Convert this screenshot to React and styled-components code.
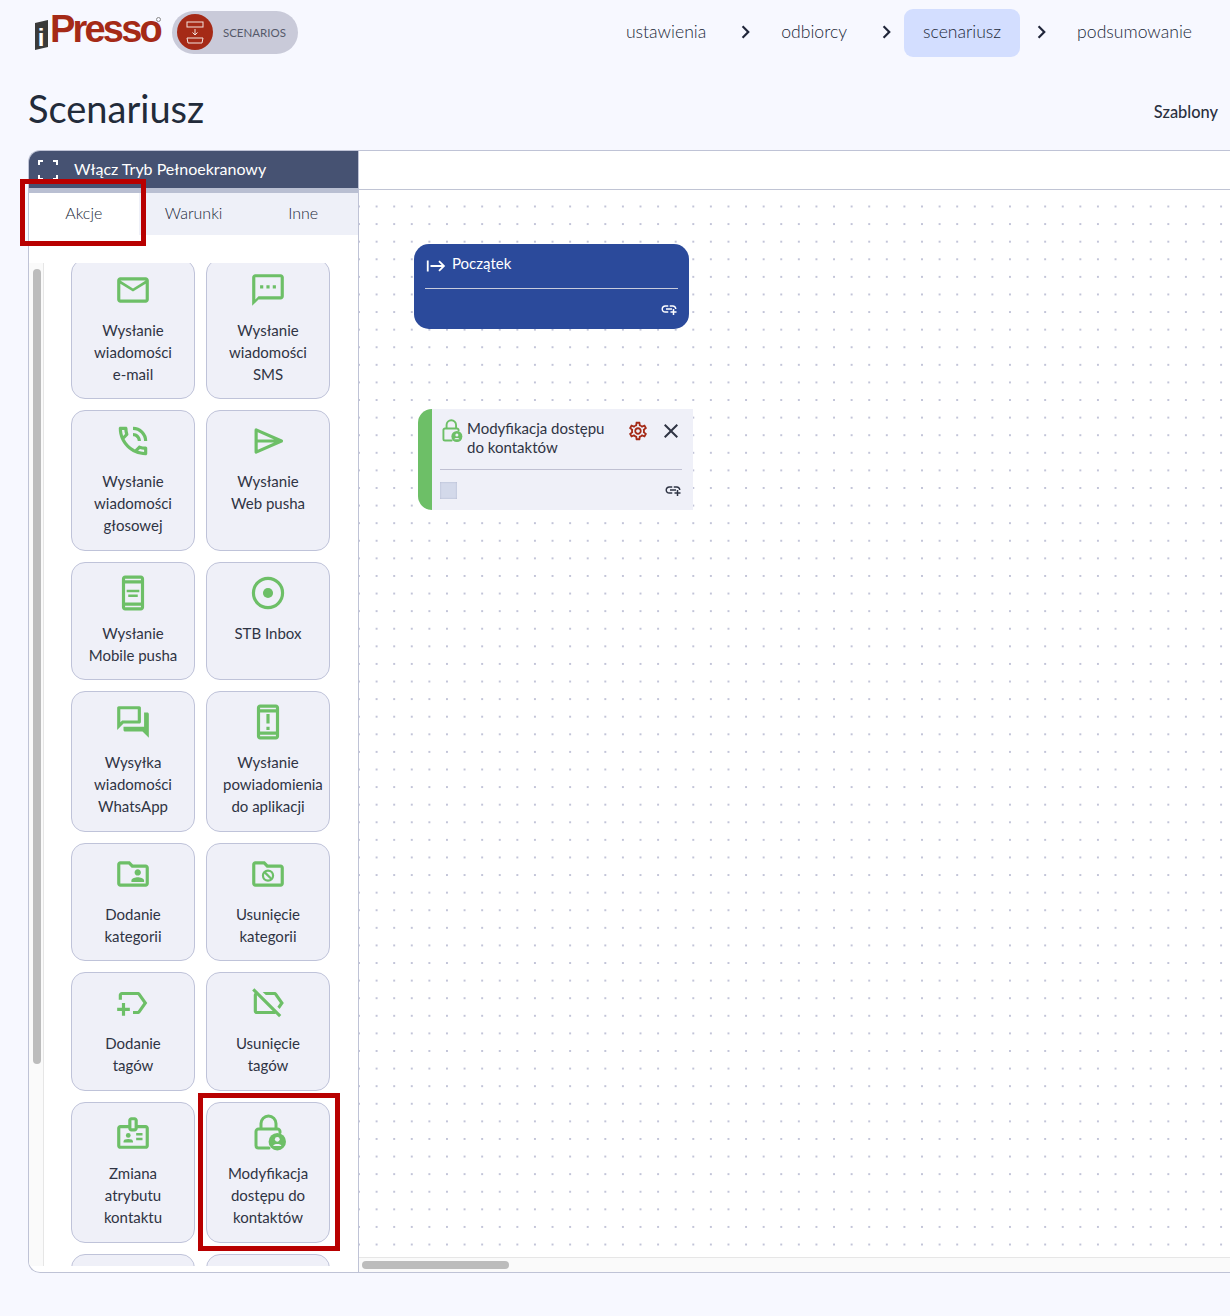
import { Fragment } from "react";
import styled, { createGlobalStyle } from "styled-components";
import {
  MdClose,
  MdChevronRight,
  MdOutlineAddLink,
  MdOutlineAod,
  MdOutlineBadge,
  MdOutlineFolderShared,
  MdOutlineForum,
  MdOutlineLabelOff,
  MdOutlineMailOutline,
  MdOutlineNewLabel,
  MdOutlinePhoneInTalk,
  MdOutlineSecurityUpdateWarning,
  MdOutlineSettings,
  MdOutlineStart,
  MdOutlineTextsms,
} from "react-icons/md";

const GlobalStyle = createGlobalStyle`
  html, body {
    margin: 0;
    padding: 0;
    background: #f7f8ff;
  }
  body {
    font-family: "Lato", "Noto Sans", sans-serif;
    color: #2f3444;
  }
`;

const Page = styled.div`
  position: relative;
  width: 1230px;
  height: 1316px;
  overflow: hidden;
  display: flex;
  flex-direction: column;
  box-sizing: border-box;
`;

const Header = styled.header`
  height: 66px;
  box-sizing: border-box;
  display: flex;
  align-items: flex-start;
  justify-content: space-between;
  padding: 9px 20px 0 34px;
`;

const Brand = styled.div`
  display: flex;
  align-items: center;
  height: 46px;
`;

const LogoMark = styled.svg`
  width: 15px;
  height: 30px;
  margin-top: 6px;
`;

const LogoText = styled.span`
  font-family: "Liberation Sans", sans-serif;
  font-weight: 700;
  font-size: 38px;
  letter-spacing: -2.8px;
  color: #a52a17;
  margin-left: 1px;
  margin-top: -5px;
`;

const LogoReg = styled.span`
  width: 3px;
  height: 3px;
  border: 1px solid #8a8a8a;
  border-radius: 50%;
  margin: -26px 0 0 -4px;
`;

const ModuleBadge = styled.div`
  display: flex;
  align-items: center;
  gap: 10px;
  width: 126px;
  height: 43px;
  box-sizing: border-box;
  margin-left: 11px;
  padding-left: 5px;
  border-radius: 22px;
  background: #c9cad9;
  font-size: 11.5px;
  color: #55596a;
`;

const ModuleIcon = styled.span`
  width: 36px;
  height: 36px;
  border-radius: 50%;
  background: #a52a17;
  display: flex;
  align-items: center;
  justify-content: center;
`;

const Steps = styled.nav`
  display: flex;
  align-items: center;
`;

const Step = styled.span`
  height: 48px;
  box-sizing: border-box;
  display: flex;
  align-items: center;
  padding: 0 ${(p) => (p.$active ? "19px" : "18px")} 3px;
  border-radius: 9px;
  font-size: 17.6px;
  font-weight: 300;
  color: #222838;
  background: ${(p) => (p.$active ? "#d3deff" : "transparent")};
`;

const StepArrow = styled(MdChevronRight)`
  width: 39px;
  font-size: 26px;
  margin: -2px -2px 0 2px;
  color: #20263a;
`;

const TitleRow = styled.div`
  height: 84px;
  display: flex;
  align-items: center;
  justify-content: space-between;
  padding: 0 12px 0 28px;
  box-sizing: border-box;
`;

const Title = styled.h1`
  margin: 0;
  font-size: 38px;
  font-weight: 400;
  color: #222b3a;
`;

const TemplatesLink = styled.span`
  margin-top: 6px;
  font-size: 16.4px;
  font-weight: 500;
  color: #2a3040;
`;

const Panel = styled.section`
  display: flex;
  width: 1202px;
  height: 1123px;
  margin-left: 28px;
  box-sizing: border-box;
  border: 1px solid #bfc3d6;
  border-right: 0;
  border-radius: 12px 0 0 12px;
  background: #fff;
  overflow: hidden;
`;

const Sidebar = styled.aside`
  width: 330px;
  flex: none;
  box-sizing: border-box;
  border-right: 1px solid #bfc3d6;
  display: flex;
  flex-direction: column;
`;

const FullscreenBar = styled.div`
  height: 42px;
  flex: none;
  box-sizing: border-box;
  border-bottom: 5px solid #b9bfd2;
  padding: 0 0 2px 7px;
  background: #465272;
  color: #fff;
  display: flex;
  align-items: center;
  gap: 14px;
  font-size: 16px;
`;

const FullscreenIcon = styled.svg`
  width: 24px;
  height: 24px;
  margin-top: 2px;
`;

const Tabs = styled.div`
  height: 42px;
  flex: none;
  display: grid;
  grid-template-columns: repeat(3, 1fr);
  background: #eef0f8;
`;

const Tab = styled.div`
  display: flex;
  align-items: center;
  justify-content: center;
  padding-bottom: 4px;
  font-size: 16px;
  font-weight: 300;
  color: #222838;
  background: ${(p) => (p.$active ? "#fff" : "transparent")};
`;

const ListArea = styled.div`
  flex: 1;
  display: flex;
  min-height: 0;
  margin: 28px 0 6px;
`;

const ScrollTrack = styled.div`
  width: 15px;
  flex: none;
  box-sizing: border-box;
  border-right: 1px solid #e6e6e6;
  background: #fafafa;
  padding: 6px 2px 0 4px;
`;

const ScrollThumb = styled.div`
  width: 8px;
  height: 795px;
  border-radius: 4px;
  background: #bcbcbc;
`;

const ActionList = styled.div`
  flex: 1;
  overflow: hidden;
  padding-left: 27px;
`;

const ActionGrid = styled.div`
  display: grid;
  grid-template-columns: 124px 124px;
  gap: 11px;
  margin-top: -4.5px;
`;

const ActionCard = styled.div`
  box-sizing: border-box;
  min-height: 60px;
  padding: 11px 16px 13.6px;
  border: 1px solid #bfc3d9;
  border-radius: 14px;
  background: #eff0f8;
  display: flex;
  flex-direction: column;
  align-items: center;
  text-align: center;
`;

const ActionIcon = styled.span`
  height: 38px;
  margin-bottom: 10px;
  display: flex;
  color: #6dbf67;
  font-size: 38px;
`;

const ActionLabel = styled.div`
  width: 90px;
  font-size: 15px;
  line-height: 22px;
  font-weight: 400;
  color: #2f3444;
`;

const Canvas = styled.div`
  flex: 1;
  min-width: 0;
  display: flex;
  flex-direction: column;
`;

const CanvasBar = styled.div`
  height: 39px;
  flex: none;
  box-sizing: border-box;
  border-bottom: 1px solid #c0c4d4;
`;

const Board = styled.div`
  position: relative;
  flex: 1;
  background-image: radial-gradient(circle, #c2c4d8 0.9px, transparent 1.2px);
  background-size: 17.6px 17.6px;
  background-position: -8.8px 7.7px;
`;

const StartNode = styled.div`
  position: absolute;
  left: 55px;
  top: 54px;
  width: 275px;
  height: 85px;
  box-sizing: border-box;
  padding: 10px 11px 0;
  border-radius: 15px;
  background: #2b4a9b;
  color: #fff;
`;

const NodeTitle = styled.div`
  height: 34px;
  display: flex;
  align-items: flex-start;
  gap: 5px;
  font-size: 15px;
  line-height: 18px;
  border-bottom: 1px solid #c8ccdc;

  svg {
    margin-top: 1px;
  }
`;

const NodeFooter = styled.div`
  display: flex;
  align-items: center;
  justify-content: flex-end;
  height: 40px;
  font-size: 18px;
`;

const ActionNode = styled.div`
  position: absolute;
  left: 59px;
  top: 219px;
  width: 275px;
  height: 101px;
  box-sizing: border-box;
  padding: 10px 11px 0 8px;
  border-left: 14px solid #6dbf67;
  border-radius: 14px 0 0 14px;
  background: #eff0f8;
  color: #2f3444;
`;

const ActionNodeHead = styled.div`
  height: 50px;
  display: flex;
  gap: 4px;
  border-bottom: 1px solid #bfc0d2;
  font-size: 15px;
  line-height: 19px;
`;

const NodeLockIcon = styled.span`
  height: 24px;
  margin-left: -1px;
  color: #6dbf67;
`;

const ActionNodeName = styled.div`
  width: 150px;
`;

const NodeTools = styled.div`
  margin: 0 -1px 0 auto;
  display: flex;
  gap: 10px;
  height: 24px;
  align-items: center;
`;

const ActionNodeFoot = styled.div`
  display: flex;
  align-items: center;
  justify-content: space-between;
  height: 40px;
  font-size: 18px;
`;

const Check = styled.span`
  width: 17px;
  height: 17px;
  background: #d3d9ea;
  box-shadow: inset 0 0 2px #a9afc8;
`;

const HScroll = styled.div`
  height: 15px;
  flex: none;
  box-sizing: border-box;
  border-top: 1px solid #e6e6e6;
  background: #fafafa;
  padding: 3px 0 0 3px;
`;

const HThumb = styled.div`
  width: 147px;
  height: 8px;
  border-radius: 4px;
  background: #bcbcbc;
`;

const Highlight = styled.div`
  position: absolute;
  left: ${(p) => p.$x}px;
  top: ${(p) => p.$y}px;
  width: ${(p) => p.$w}px;
  height: ${(p) => p.$h}px;
  box-sizing: border-box;
  border: 5px solid #b80000;
  pointer-events: none;
`;

const FolderBlockIcon = () => (
  <svg width="38" height="38" viewBox="0 0 24 24" fill="currentColor">
    <path d="M20 6h-8l-2-2H4c-1.1 0-1.99.9-1.99 2L2 18c0 1.1.9 2 2 2h16c1.1 0 2-.9 2-2V8c0-1.1-.9-2-2-2zm0 12H4V6h5.17l2 2H20v10z" />
    <circle cx="12" cy="13" r="3.2" fill="none" stroke="currentColor" strokeWidth="1.4" />
    <path d="M9.8 10.8l4.4 4.4" stroke="currentColor" strokeWidth="1.4" />
  </svg>
);

const LockPersonIcon = ({ size = 38 }) => (
  <svg width={size} height={size} viewBox="0 0 38 38" fill="none">
    <path
      d="M20 34H9.5A2.500 2.500 0 0 1 7 31.500V17.500A2.500 2.500 0 0 1 9.500 15h19a2.500 2.500 0 0 1 2.500 2.500v1"
      stroke="currentColor"
      strokeWidth="3"
      strokeLinecap="round"
    />
    <path d="M12 15V9.500a7.500 7.500 0 0 1 15 0V15" stroke="currentColor" strokeWidth="3" />
    <circle cx="28.300" cy="27.700" r="8.700" fill="currentColor" />
    <circle cx="28.300" cy="25.300" r="2.400" fill="#eff0f8" />
    <path d="M24.200 32c.6-2.600 7.600-2.600 8.200 0z" fill="#eff0f8" />
  </svg>
);

const SendIcon = () => (
  <svg width="38" height="38" viewBox="0 0 24 24" fill="none" stroke="currentColor" strokeWidth="2" strokeLinejoin="round">
    <path d="M4.500 5l16 7-16 7zM4.500 12H19" />
  </svg>
);

const InboxIcon = () => (
  <svg width="38" height="38" viewBox="0 0 24 24" fill="none">
    <circle cx="12" cy="12" r="9.200" stroke="currentColor" strokeWidth="2" />
    <circle cx="12" cy="12" r="3.200" fill="currentColor" />
  </svg>
);

const actions = [
  { label: "Wysłanie wiadomości e-mail", icon: <MdOutlineMailOutline /> },
  { label: "Wysłanie wiadomości SMS", icon: <MdOutlineTextsms /> },
  { label: "Wysłanie wiadomości głosowej", icon: <MdOutlinePhoneInTalk /> },
  { label: "Wysłanie Web pusha", icon: <SendIcon /> },
  { label: "Wysłanie Mobile pusha", icon: <MdOutlineAod /> },
  { label: "STB Inbox", icon: <InboxIcon /> },
  { label: "Wysyłka wiadomości WhatsApp", icon: <MdOutlineForum /> },
  { label: "Wysłanie powiadomienia do aplikacji", icon: <MdOutlineSecurityUpdateWarning /> },
  { label: "Dodanie kategorii", icon: <MdOutlineFolderShared /> },
  { label: "Usunięcie kategorii", icon: <FolderBlockIcon /> },
  { label: "Dodanie tagów", icon: <MdOutlineNewLabel /> },
  { label: "Usunięcie tagów", icon: <MdOutlineLabelOff /> },
  { label: "Zmiana atrybutu kontaktu", icon: <MdOutlineBadge /> },
  { label: "Modyfikacja dostępu do kontaktów", icon: <LockPersonIcon /> },
];

const steps = ["ustawienia", "odbiorcy", "scenariusz", "podsumowanie"];

export default function App() {
  return (
    <Page>
      <GlobalStyle />
      <Header>
        <Brand>
          <LogoMark viewBox="0 0 15 30">
            <polygon points="1,3 14,0 14,27 1,30" fill="#3a3a3a" />
            <text x="3.800" y="26" fontFamily="Liberation Sans" fontWeight="700" fontSize="24" fill="#fff">i</text>
          </LogoMark>
          <LogoText>Presso</LogoText>
          <LogoReg />
          <ModuleBadge>
            <ModuleIcon>
              <svg width="22" height="24" viewBox="0 0 22 24" fill="none" stroke="#f3e3df" strokeWidth="1">
                <rect x="3" y="2" width="16" height="5" />
                <path d="M3 18h16l-1 5H4z" />
                <path d="M11 9v6M8.500 12.500l2.500 2.500 2.500-2.500" />
              </svg>
            </ModuleIcon>
            SCENARIOS
          </ModuleBadge>
        </Brand>
        <Steps>
          {steps.map((step, i) => (
            <Fragment key={step}>
              {i > 0 && <StepArrow />}
              <Step $active={step === "scenariusz"}>{step}</Step>
            </Fragment>
          ))}
        </Steps>
      </Header>

      <TitleRow>
        <Title>Scenariusz</Title>
        <TemplatesLink>Szablony</TemplatesLink>
      </TitleRow>

      <Panel>
        <Sidebar>
          <FullscreenBar>
            <FullscreenIcon viewBox="0 0 24 24" fill="none" stroke="#fff" strokeWidth="2">
              <path d="M3 7V3h4M17 3h4v4M21 17v4h-4M7 21H3v-4" />
            </FullscreenIcon>
            Włącz Tryb Pełnoekranowy
          </FullscreenBar>
          <Tabs>
            <Tab $active>Akcje</Tab>
            <Tab>Warunki</Tab>
            <Tab>Inne</Tab>
          </Tabs>
          <ListArea>
            <ScrollTrack>
              <ScrollThumb />
            </ScrollTrack>
            <ActionList>
              <ActionGrid>
                {actions.map((action) => (
                  <ActionCard key={action.label}>
                    <ActionIcon>{action.icon}</ActionIcon>
                    <ActionLabel>{action.label}</ActionLabel>
                  </ActionCard>
                ))}
                <ActionCard />
                <ActionCard />
              </ActionGrid>
            </ActionList>
          </ListArea>
        </Sidebar>

        <Canvas>
          <CanvasBar />
          <Board>
            <StartNode>
              <NodeTitle>
                <MdOutlineStart size={22} />
                Początek
              </NodeTitle>
              <NodeFooter>
                <MdOutlineAddLink />
              </NodeFooter>
            </StartNode>
            <ActionNode>
              <ActionNodeHead>
                <NodeLockIcon>
                  <LockPersonIcon size={24} />
                </NodeLockIcon>
                <ActionNodeName>Modyfikacja dostępu do kontaktów</ActionNodeName>
                <NodeTools>
                  <MdOutlineSettings size={22} color="#a52a17" />
                  <MdClose size={24} />
                </NodeTools>
              </ActionNodeHead>
              <ActionNodeFoot>
                <Check />
                <MdOutlineAddLink />
              </ActionNodeFoot>
            </ActionNode>
          </Board>
          <HScroll>
            <HThumb />
          </HScroll>
        </Canvas>
      </Panel>

      <Highlight $x={20} $y={179} $w={126} $h={67} />
      <Highlight $x={198} $y={1093} $w={142} $h={158} />
    </Page>
  );
}
